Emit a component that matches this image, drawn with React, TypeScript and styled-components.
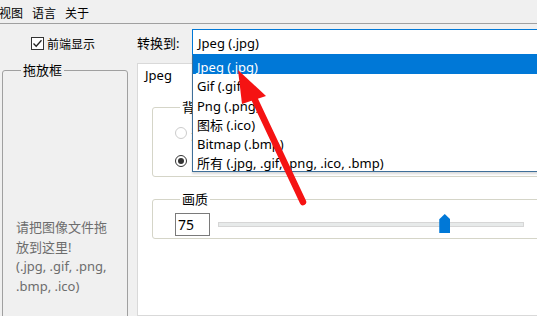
import React from 'react';
import styled, { createGlobalStyle } from 'styled-components';

const GlobalStyle = createGlobalStyle`
  html, body {
    margin: 0;
    padding: 0;
    background: #f0f0f0;
    overflow: hidden;
  }
  body {
    font-family: "Noto Sans", "Noto Sans CJK SC", sans-serif;
    font-size: 13px;
    color: #000;
  }
`;

const Window = styled.div`
  position: relative;
  width: 537px;
  height: 316px;
  overflow: hidden;
  background: #f0f0f0;
  display: flex;
  flex-direction: column;
`;

const MenuBar = styled.div`
  height: 24px;
  flex-shrink: 0;
  display: flex;
  align-items: center;
  gap: 9px;
  border-bottom: 1px solid #a0a0a0;
  font-size: 12px;
  line-height: 20px;
  padding-top: 4px;
  box-sizing: border-box;
`;

const MenuItem = styled.span`
  &:first-child {
    margin-left: -1px;
  }
`;

const Main = styled.div`
  flex: 1;
  display: flex;
  min-height: 0;
`;

const LeftCol = styled.div`
  width: 128px;
  flex-shrink: 0;
  box-sizing: border-box;
  padding: 13px 0 0 2px;
  display: flex;
  flex-direction: column;
`;

const CheckRow = styled.label`
  display: flex;
  align-items: center;
  gap: 3px;
  height: 13px;
  margin-left: 29px;
  font-size: 12px;
`;

const CheckBox = styled.span`
  width: 13px;
  height: 13px;
  box-sizing: border-box;
  border: 1px solid #333;
  background: #fff;
  display: flex;
  align-items: center;
  justify-content: center;
`;

const DropGroup = styled.fieldset`
  margin: 12px 0 0 0;
  padding: 0 0 0 13px;
  width: 126px;
  min-height: 320px;
  box-sizing: border-box;
  border: 1px solid #a0a0a0;
  border-radius: 3px;
`;

const GroupLegend = styled.legend`
  padding: 0 2px;
  margin-left: 5px;
  font-size: 13px;
  line-height: 17px;
`;

const DropHint = styled.div`
  margin-top: 139px;
  color: #6d6d6d;
  font-size: 13px;
  line-height: 19.7px;
  width: 100px;
`;

const RightCol = styled.div`
  width: 500px;
  flex-shrink: 0;
  padding-left: 9px;
  box-sizing: border-box;
  display: flex;
  flex-direction: column;
`;

const ConvertRow = styled.div`
  display: flex;
  align-items: center;
  margin-top: 5px;
  height: 26px;
`;

const ConvertLabel = styled.span`
  width: 55px;
  flex-shrink: 0;
  font-size: 13px;
  padding-top: 1px;
`;

const Select = styled.div`
  position: relative;
  width: 400px;
  height: 26px;
  box-sizing: border-box;
  border: 1px solid #0078d7;
  background: #fff;
  padding: 4px 0 0 5px;
  line-height: 18px;
  z-index: 5;
`;

const DropList = styled.div`
  position: absolute;
  top: 25px;
  left: -1px;
  width: 400px;
  background: #fff;
  border: 1px solid #3f6f99;
  border-top: none;
  box-shadow: 0 2px 2px rgba(0, 0, 0, 0.15);
`;

const DropItem = styled.div<{ $active?: boolean }>`
  height: 19.3px;
  box-sizing: border-box;
  line-height: 19px;
  padding: 3px 0 0 4px;
  white-space: nowrap;
  background: ${p => (p.$active ? '#0078d7' : 'transparent')};
  color: ${p => (p.$active ? '#fff' : '#000')};
`;

const TabStrip = styled.div`
  display: flex;
  margin-top: 8px;
`;

const Tab = styled.div`
  position: relative;
  z-index: 1;
  height: 23px;
  box-sizing: border-box;
  padding: 0 26px 0 7px;
  margin-bottom: -1px;
  background: #fff;
  border: 1px solid #d9d9d9;
  border-bottom: none;
  display: flex;
  align-items: center;
  font-size: 13px;
`;

const TabPanel = styled.div`
  flex: 1;
  background: #fff;
  border: 1px solid #d9d9d9;
  padding: 13px 0 0 14px;
`;

const Group = styled.fieldset<{ $gap?: number }>`
  margin: ${p => p.$gap ?? 0}px 0 0 0;
  padding: 3px 0 1px 22px;
  border: 1px solid #d5d5c8;
  border-radius: 3px;
`;

const RadioRow = styled.div`
  display: flex;
  align-items: center;
  gap: 4px;
  height: 28px;
`;

const Radio = styled.span<{ $checked?: boolean; $disabled?: boolean }>`
  width: 12px;
  height: 12px;
  box-sizing: border-box;
  border-radius: 50%;
  border: 1px solid ${p => (p.$disabled ? '#cccccc' : '#333')};
  background: #fff;
  display: flex;
  align-items: center;
  justify-content: center;

  &::after {
    content: '';
    width: 6px;
    height: 6px;
    border-radius: 50%;
    background: ${p => (p.$checked ? '#333' : 'transparent')};
  }
`;

const RadioText = styled.span<{ $disabled?: boolean }>`
  color: ${p => (p.$disabled ? '#a0a0a0' : '#000')};
`;

const QualityRow = styled.div`
  display: flex;
  align-items: center;
  gap: 8px;
  margin-top: 2px;
  padding-bottom: 1px;
`;

const NumberBox = styled.div`
  width: 35px;
  height: 23px;
  box-sizing: border-box;
  border: 1px solid #7a7a7a;
  padding-left: 2px;
  font-size: 14px;
  line-height: 21px;
  background: #fff;
`;

const Track = styled.div`
  position: relative;
  width: 306px;
  height: 5px;
  box-sizing: border-box;
  background: #e7eaea;
  border: 1px solid #d6d6d6;
`;

const Thumb = styled.div`
  position: absolute;
  top: -9px;
  width: 11px;
  height: 19px;
  background: #0078d7;
  clip-path: polygon(50% 0, 100% 28%, 100% 100%, 0 100%, 0 28%);
`;

const ArrowLayer = styled.svg`
  position: absolute;
  left: 0;
  top: 0;
  pointer-events: none;
  z-index: 10;
`;

const formats = [
  'Jpeg (.jpg)',
  'Gif (.gif)',
  'Png (.png)',
  '图标 (.ico)',
  'Bitmap (.bmp)',
  '所有 (.jpg, .gif, .png, .ico, .bmp)',
];

const quality = 75;
const trackWidth = 306;
const thumbWidth = 11;

export default function App() {
  return (
    <>
      <GlobalStyle />
      <Window>
        <MenuBar>
          <MenuItem>视图</MenuItem>
          <MenuItem>语言</MenuItem>
          <MenuItem>关于</MenuItem>
        </MenuBar>
        <Main>
          <LeftCol>
            <CheckRow>
              <CheckBox>
                <svg width="11" height="11" viewBox="0 0 11 11">
                  <polyline points="1.5,5.5 4.2,8.3 9.5,2.2" fill="none" stroke="#222" strokeWidth="1.3" />
                </svg>
              </CheckBox>
              前端显示
            </CheckRow>
            <DropGroup>
              <GroupLegend>拖放框</GroupLegend>
              <DropHint>
                请把图像文件拖放到这里!
                <br />
                (.jpg, .gif, .png, .bmp, .ico)
              </DropHint>
            </DropGroup>
          </LeftCol>
          <RightCol>
            <ConvertRow>
              <ConvertLabel>转换到:</ConvertLabel>
              <Select>
                Jpeg (.jpg)
                <DropList>
                  {formats.map((f, i) => (
                    <DropItem key={f} $active={i === 0}>
                      {f}
                    </DropItem>
                  ))}
                </DropList>
              </Select>
            </ConvertRow>
            <TabStrip>
              <Tab>Jpeg</Tab>
            </TabStrip>
            <TabPanel>
              <Group>
                <GroupLegend>背景色</GroupLegend>
                <RadioRow>
                  <Radio $disabled />
                  <RadioText $disabled>透明</RadioText>
                </RadioRow>
                <RadioRow>
                  <Radio $checked />
                  <RadioText>白色</RadioText>
                </RadioRow>
              </Group>
              <Group $gap={14}>
                <GroupLegend>画质</GroupLegend>
                <QualityRow>
                  <NumberBox>{quality}</NumberBox>
                  <Track>
                    <Thumb style={{ left: ((trackWidth - thumbWidth) * quality) / 100 - 1 }} />
                  </Track>
                </QualityRow>
              </Group>
            </TabPanel>
          </RightCol>
        </Main>
        <ArrowLayer width="537" height="316" viewBox="0 0 537 316">
          <line x1="254" y1="98" x2="303" y2="202" stroke="#f51313" strokeWidth="6.5" strokeLinecap="round" />
          <polygon points="238,70 266,96 242,104" fill="#f51313" />
        </ArrowLayer>
      </Window>
    </>
  );
}
